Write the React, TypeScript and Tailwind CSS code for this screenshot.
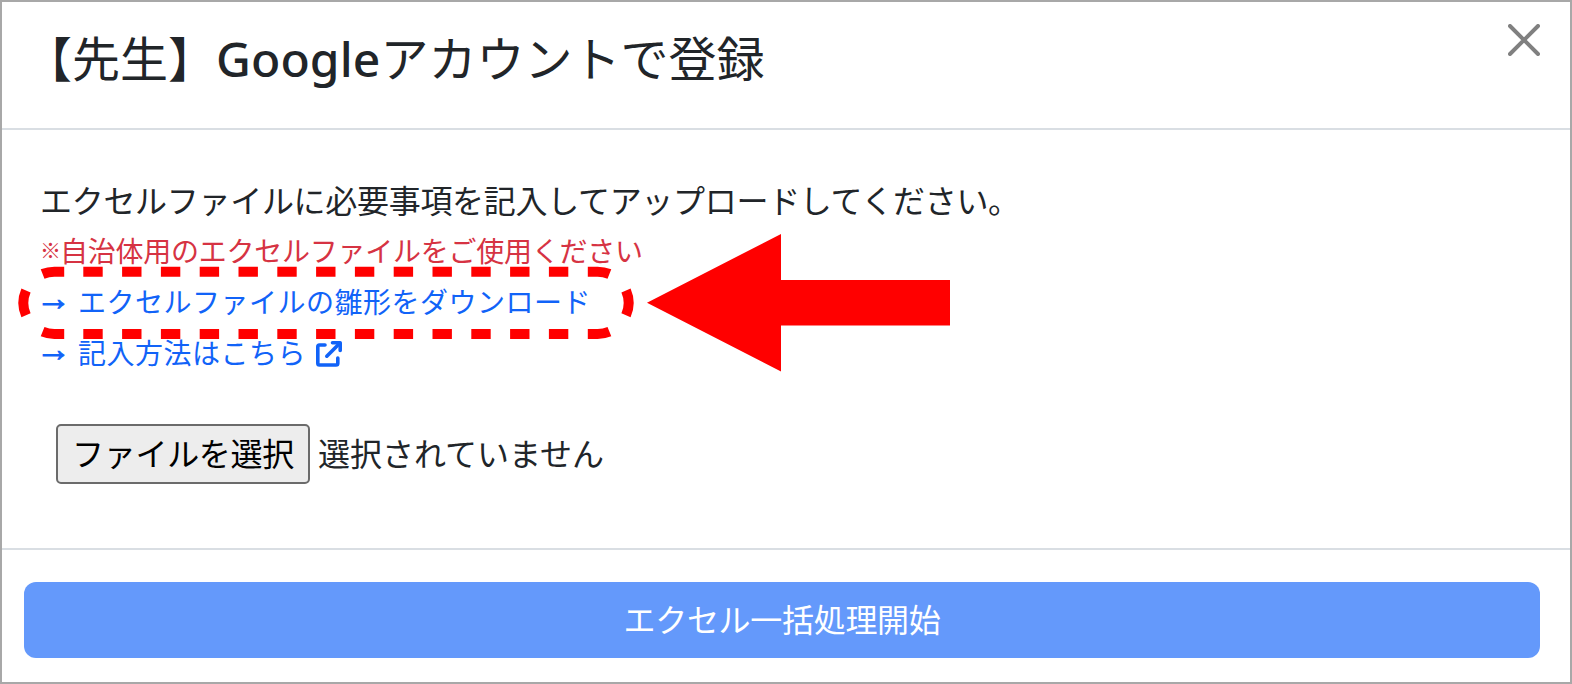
const links = [
    { id: 0, label: "エクセルファイルの雛形をダウンロード", external: false },
    { id: 1, label: "記入方法はこちら", external: true },
];

const CloseIcon = () => (
    <svg className="size-8" viewBox="0 0 32 32" fill="none" stroke="#808080" strokeWidth="4" strokeLinecap="round">
        <path d="M2 2l28 28M30 2L2 30" />
    </svg>
);

const ExternalIcon = () => (
    <svg className="w-[26px] h-[26px]" viewBox="0 0 26 26" fill="none" stroke="currentColor" strokeWidth="3.6">
        <path d="M9 4H3.5Q1.8 4 1.8 5.7V22.3Q1.8 24 3.5 24H20Q21.8 24 21.8 22.3V17" strokeLinecap="round" />
        <path d="M10.8 15.2L22.5 3.5" strokeLinecap="round" />
        <path d="M16.5 1.8H24.2V9.5" strokeLinecap="round" strokeLinejoin="round" />
    </svg>
);

const Highlight = () => (
    <svg
        className="absolute left-0 top-[220px] w-[960px] h-[160px] pointer-events-none"
        viewBox="0 220 960 160"
        fill="none"
        stroke="#ff0000"
        strokeWidth="10"
    >
        <path d="M83.3 271.7H586" strokeDasharray="19.4 19.4" />
        <path d="M83.3 334H586" strokeDasharray="19.4 19.4" />
        <path d="M42.6 274A31.2 31.2 0 0 1 54.5 271.7H64.2" />
        <path d="M42.6 331.7A31.2 31.2 0 0 0 54.5 334H64.2" />
        <path d="M609.4 274A31.2 31.2 0 0 0 597.5 271.7H587.8" />
        <path d="M609.4 331.7A31.2 31.2 0 0 1 597.5 334H587.8" />
        <path d="M26 290.4A31.2 31.2 0 0 0 26 315.3" />
        <path d="M626 290.4A31.2 31.2 0 0 1 626 315.3" />
        <path d="M647 302.7L781 234V280H950V325.5H781V371.5Z" fill="#ff0000" stroke="none" />
    </svg>
);

const App = () => {
    return (
        <main className="relative w-[1572px] h-[684px] flex flex-col bg-white border-2 border-[#a8a8a8] text-[#212529] font-['Noto_Sans_CJK_JP',sans-serif] whitespace-nowrap">
            <header className="h-[128px] shrink-0 flex justify-between border-b-2 border-[#d9dee3] pl-[22px] pr-[30px]">
                <h1 className="mt-[18px] text-[48px] leading-[72px] font-normal">
                    【先生】<span className="font-['Noto_Sans'] font-medium tracking-[0.1px]">Google</span>アカウントで登録
                </h1>
                <button className="mt-[22px] size-8" aria-label="閉じる">
                    <CloseIcon />
                </button>
            </header>
            <section className="grow pt-[45px] pl-[38px]">
                <p className="text-[32px] leading-[48px] tracking-[-0.3px]">
                    エクセルファイルに必要事項を記入してアップロードしてください。
                </p>
                <p className="flex items-center h-[54px] text-[28px] tracking-[-0.25px] text-[#d63343]">
                    <span className="w-[20px] text-[21px] font-bold">※</span>自治体用のエクセルファイルをご使用ください
                </p>
                {links.map((link) => (
                    <a key={link.id} className="flex items-center text-[28px] h-[51px] pb-[3px] tracking-[0.5px] text-[#1163f8]">
                        <span className="w-[42px] -ml-1 pb-2 text-[35px] leading-none font-['Liberation_Sans'] [-webkit-text-stroke:1px_#1163f8]">→</span>
                        {link.label}
                        {link.external && <span className="ml-2.5 pt-[3px]"><ExternalIcon /></span>}
                    </a>
                ))}
                <section className="mt-[45px] ml-4 flex items-center text-[32px] tracking-[-0.3px]">
                    <button className="w-[254px] h-[60px] pb-1 shrink-0 flex items-center justify-center bg-[#ededed] border-2 border-[#6b6b6b] rounded-[5px] text-black">
                        ファイルを選択
                    </button>
                    <p className="ml-2 pb-1 tracking-[0px]">選択されていません</p>
                </section>
            </section>
            <footer className="h-[134px] shrink-0 border-t-2 border-[#d9dee3] pt-8 pl-[22px] pr-[30px]">
                <button className="w-full h-[76px] pb-1 flex items-center justify-center bg-[#6499fb] rounded-xl text-white text-[32px] tracking-[-0.3px]">
                    エクセル一括処理開始
                </button>
            </footer>
            <section className="absolute -left-0.5 -top-0.5">
                <Highlight />
            </section>
        </main>
    )
}

export default App;
